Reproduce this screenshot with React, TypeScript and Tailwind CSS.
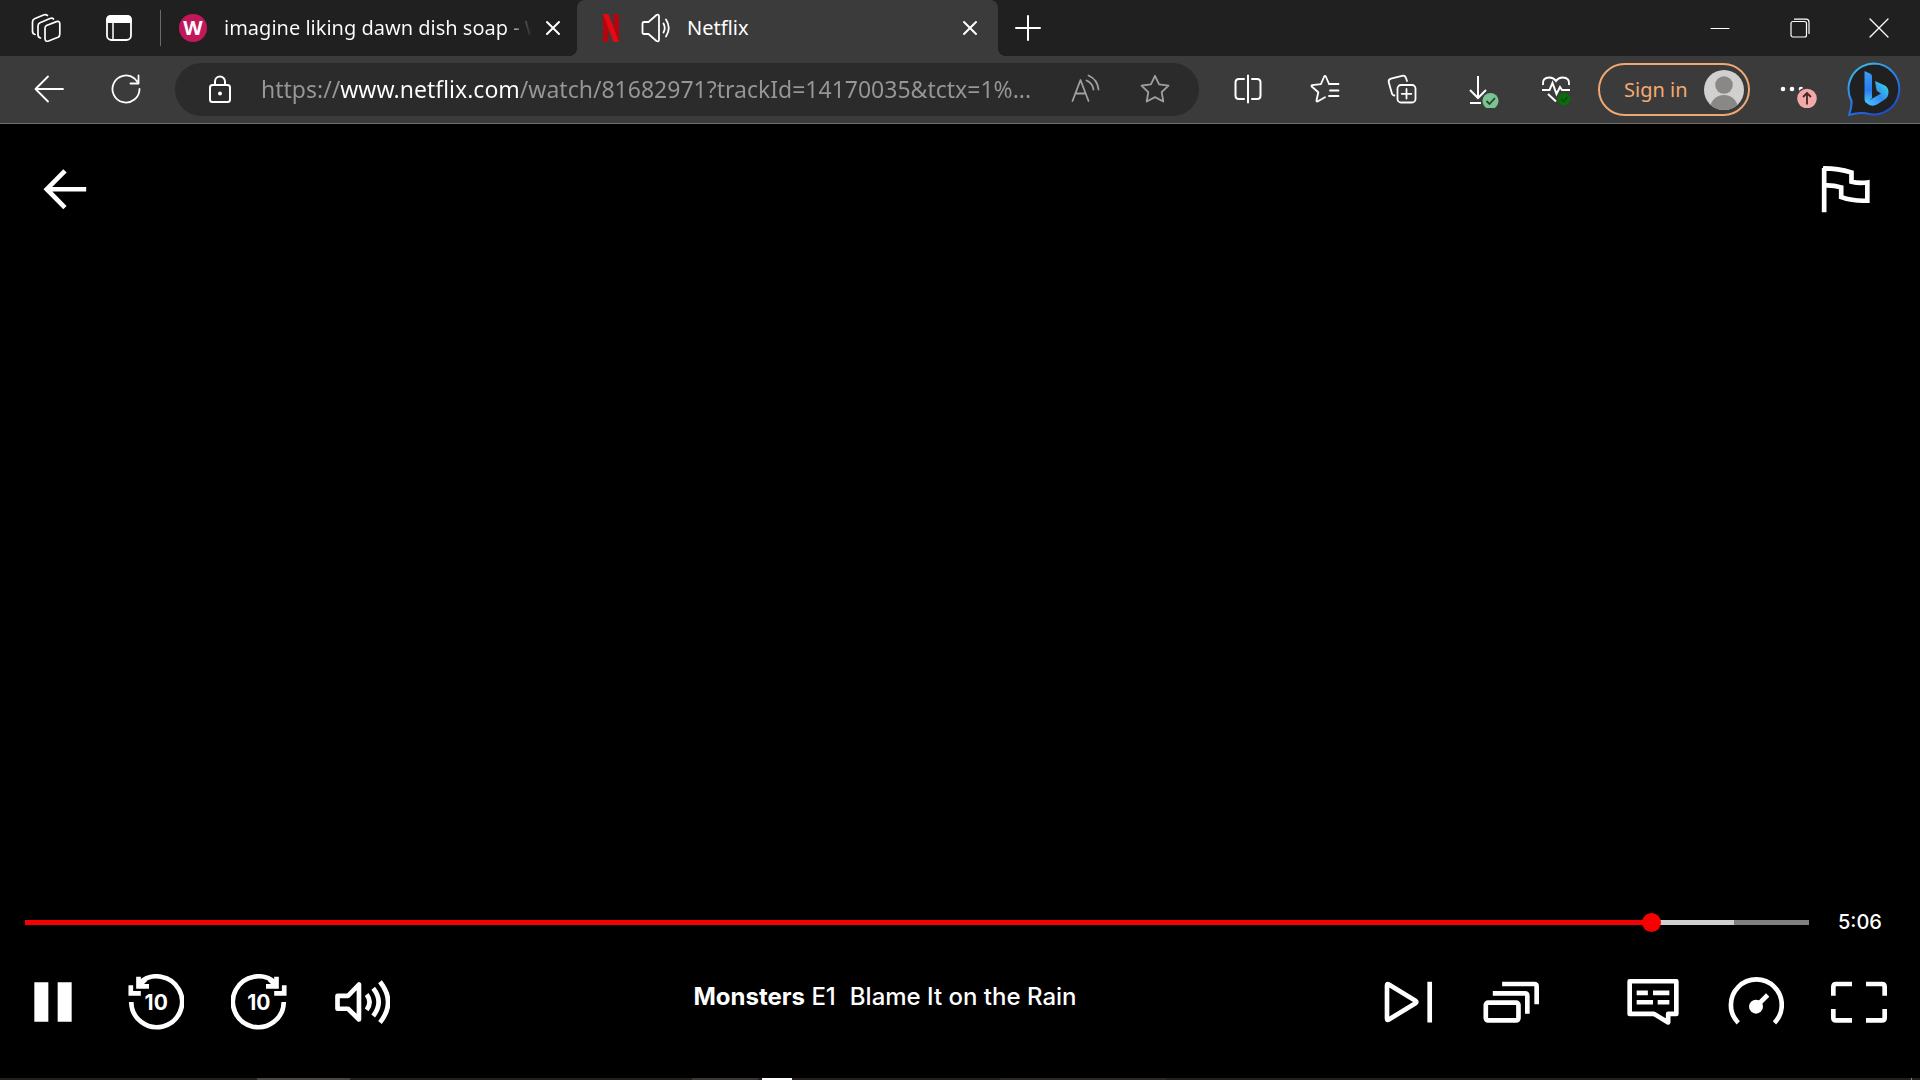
import React from "react";

interface IconProps {
  size: number;
  children: React.ReactNode;
  width?: number;
}

// thin outline icons of the browser chrome, 1 unit = 1px
const LineIcon: React.FC<IconProps> = ({ size, children, width = 2 }) => (
  <svg
    width={size}
    height={size}
    viewBox={`0 0 ${size} ${size}`}
    fill="none"
    stroke="currentColor"
    strokeWidth={width}
    strokeLinecap="round"
    strokeLinejoin="round"
    aria-hidden="true"
    className="shrink-0"
  >
    {children}
  </svg>
);

interface ButtonProps {
  label: string;
  className?: string;
  children: React.ReactNode;
}

const IconButton: React.FC<ButtonProps> = ({ label, className = "", children }) => (
  <button
    type="button"
    aria-label={label}
    className={`flex shrink-0 items-center justify-center ${className}`}
  >
    {children}
  </button>
);

const PlayerButton: React.FC<ButtonProps> = ({ label, children }) => (
  <button type="button" aria-label={label} className="size-14 shrink-0 text-white">
    <svg viewBox="0 0 24 24" className="size-14" fill="none" stroke="currentColor" strokeWidth="2">
      {children}
    </svg>
  </button>
);

const CloseIcon: React.FC = () => (
  <LineIcon size={16}>
    <path d="M2 2L14 14M14 2L2 14" />
  </LineIcon>
);

const TabBar: React.FC = () => (
  <div className="flex h-14 items-center bg-[#202020] text-white">
    <IconButton label="Workspaces" className="ml-[30px] size-8">
      <LineIcon size={32} width={1.7}>
        <path d="M16.500 13.500L26.500 9.600Q29.800 8.700 29.800 12V22Q29.800 24.500 28 25.300L18.500 29Q15 30 15 26.500V16.500Q15 14.300 16.500 13.500Z" />
        <path d="M10.500 26Q8 25.500 8 22.500V14Q8 11.500 10 10.700L20 6.500Q22.500 5.500 23.500 7" />
        <path d="M5 22.500Q2.500 22 2.500 19V10Q2.500 7.500 4.500 6.700L13.500 3Q16 2 17.500 3.500" />
      </LineIcon>
    </IconButton>
    <IconButton label="Tab actions" className="ml-[41px] size-8">
      <LineIcon size={32} width={1.8}>
        <rect x="4" y="4" width="24" height="24" rx="4.500" />
        <path d="M4 10V8Q4 4 8 4H24Q28 4 28 8V10Z" fill="currentColor" />
        <path d="M10 11V28" strokeWidth="1.500" />
      </LineIcon>
    </IconButton>
    <div className="ml-[25px] h-9 w-px bg-[#6a6a6a]" />

    <div className="ml-[18px] flex h-14 w-[398px] items-center">
      <span className="flex size-7 shrink-0 items-center justify-center rounded-full bg-[#c2185b] font-['Open_Sans',sans-serif] text-xl font-bold">
        W
      </span>
      <span className="ml-[17px] w-[321px] bg-[linear-gradient(to_right,#ffffff_280px,transparent_308px)] bg-clip-text font-['Noto_Sans',sans-serif] text-[20px] leading-7 whitespace-nowrap text-transparent">
        imagine liking dawn dish soap - W
      </span>
      <IconButton label="Close tab" className="size-4">
        <CloseIcon />
      </IconButton>
    </div>

    <div className="relative flex h-14 w-[421px] items-center rounded-t-lg bg-[#3b3b3b] before:absolute before:-left-2 before:bottom-0 before:size-2 before:bg-[radial-gradient(circle_at_0_0,#202020_8px,#3b3b3b_8px)] after:absolute after:-right-2 after:bottom-0 after:size-2 after:bg-[radial-gradient(circle_at_100%_0,#202020_8px,#3b3b3b_8px)]">
      <svg viewBox="0 0 18 28" className="ml-[25px] h-7 w-[18px]" aria-hidden="true">
        <path d="M1 0H6.500V28H1Z M11.500 0H17V28H11.500Z" fill="#b1060f" />
        <path d="M1 0H6.500L17 28H11.500Z" fill="#e50914" />
      </svg>
      <IconButton label="Mute tab" className="ml-5 size-8">
        <LineIcon size={32} width={1.800}>
          <path d="M4 10H8.500L16.500 3Q19 1.800 19 4.500V27.500Q19 30.200 16.500 29L8.500 22H4Q2.500 22 2.500 20.500V11.500Q2.500 10 4 10Z" />
          <path d="M23.500 11.500Q26 16 23.500 20.500M26 7.500Q31.500 16 26 24.500" />
        </LineIcon>
      </IconButton>
      <span className="ml-[15px] flex-1 font-['Noto_Sans',sans-serif] text-[20px] leading-7">
        Netflix
      </span>
      <IconButton label="Close tab" className="mr-5 size-4">
        <CloseIcon />
      </IconButton>
    </div>
    <IconButton label="New tab" className="ml-4 size-7">
      <LineIcon size={28}>
        <path d="M14 2V26M2 14H26" />
      </LineIcon>
    </IconButton>

    <div className="ml-auto flex h-14 pr-[2px]">
      <IconButton label="Minimize" className="w-20">
        <LineIcon size={20} width={1}>
          <path d="M1 10.500H19" />
        </LineIcon>
      </IconButton>
      <IconButton label="Restore" className="w-20">
        <LineIcon size={20} width={1.200}>
          <rect x="1" y="3.500" width="15.500" height="15.500" rx="2" />
          <path d="M4.500 1.200H16Q19 1.200 19 4.200V15.500" />
        </LineIcon>
      </IconButton>
      <IconButton label="Close window" className="w-[78px]">
        <LineIcon size={20} width={1.300}>
          <path d="M1 1L19 19M19 1L1 19" />
        </LineIcon>
      </IconButton>
    </div>
  </div>
);

const Toolbar: React.FC = () => (
  <div className="flex h-[68px] items-center border-b border-[#707070] bg-[#3b3b3b] text-white">
    <IconButton label="Back" className="ml-[33px] size-8 pb-0.5">
      <LineIcon size={32} width={1.800}>
        <path d="M30 16H2.500M15 3.500L2.500 16L15 28.500" />
      </LineIcon>
    </IconButton>
    <IconButton label="Refresh" className="ml-[45px] size-8 pb-0.5">
      <LineIcon size={32} width={1.800}>
        <path d="M29.500 16A13.500 13.500 0 1 1 24.500 5.500L28 9.500M28.500 2.500V10.500H20.500" />
      </LineIcon>
    </IconButton>

    <div className="ml-[33px] flex h-[53px] min-w-0 flex-1 items-center rounded-full bg-[#2b2b2b]">
      <IconButton label="View site information" className="ml-[29px] size-8 pb-0.5">
        <LineIcon size={32}>
          <rect x="6" y="12" width="20" height="17" rx="2.500" />
          <path d="M11 12V8.500A5 5 0 0 1 21 8.500V12" />
          <circle cx="16" cy="20.500" r="1" fill="currentColor" />
        </LineIcon>
      </IconButton>
      <input
        type="text"
        aria-label="Address and search bar"
        defaultValue="https://www.netflix.com/watch/81682971?trackId=14170035&tctx=1%..."
        className="ml-[25px] h-10 min-w-0 flex-1 bg-[linear-gradient(to_right,#979797_79px,#ffffff_79px,#ffffff_257px,#979797_257px)] bg-clip-text pb-0.5 font-['Noto_Sans',sans-serif] text-[23px] text-transparent outline-none"
      />
      <IconButton label="Read aloud" className="ml-3 size-8 pb-0.5 text-[#a0a0a0]">
        <LineIcon size={32} width={1.800}>
          <path d="M2.500 28L10.500 7L18.500 28M5.500 20.500H15.500" />
          <path d="M16.500 7.500Q22.500 10 23.500 16.500M18.500 2.500Q27.500 6.500 28.500 16.500" />
        </LineIcon>
      </IconButton>
      <IconButton label="Add to favorites" className="mr-7 ml-[37px] size-8 pb-0.5 text-[#a0a0a0]">
        <LineIcon size={32} width={1.800}>
          <path d="M16 2.800L20.100 11.300L29.500 12.600L22.700 19.200L24.300 28.500L16 24.100L7.700 28.500L9.300 19.200L2.500 12.600L11.900 11.300Z" />
        </LineIcon>
      </IconButton>
    </div>

    <IconButton label="Split screen" className="ml-[33px] size-8 pb-0.5">
      <LineIcon size={32}>
        <path d="M16 2.500V29.500M12 6H7Q3.500 6 3.500 9.500V22.500Q3.500 26 7 26H12M20 6H25Q28.500 6 28.500 9.500V22.500Q28.500 26 25 26H20" />
      </LineIcon>
    </IconButton>
    <IconButton label="Favorites" className="ml-[45px] size-8 pb-0.5">
      <LineIcon size={32} width={1.800}>
        <path d="M20 11H29.500M21 17.500H29.500M20 23H29.500" />
        <path d="M16 24.300L8.500 28.500Q7.300 28.800 7.500 27.500L9.300 19.200L2.700 13.500Q2 12.400 3.200 12.200L11.900 11.100L15.200 3.500Q16 2.300 16.800 3.500L19.800 10.500" />
      </LineIcon>
    </IconButton>
    <IconButton label="Collections" className="ml-[45px] size-8 pb-0.5">
      <LineIcon size={32} width={1.800}>
        <rect x="11.500" y="12" width="18" height="17.500" rx="3.500" />
        <path d="M20.500 16V25.500M15.700 20.800H25.300M8.500 22.500Q6.500 22.500 5.800 20L2.800 9.500Q2 6.500 5 5.600L16 2.800Q19 2 20 5L21 8" />
      </LineIcon>
    </IconButton>
    <IconButton label="Downloads" className="ml-[48px] size-9">
      <svg width="36" height="36" viewBox="0 0 36 36" fill="none" stroke="currentColor" strokeWidth="2">
        <path d="M12 4V25M4 18L12 26L20 18M4 31H15" />
        <circle cx="24.500" cy="29" r="8" fill="#7cc392" stroke="none" />
        <path d="M20.500 29L23.500 32L29 26" stroke="#24452e" strokeWidth="1.800" />
      </svg>
    </IconButton>
    <IconButton label="Browser essentials" className="ml-9 size-9">
      <svg width="36" height="36" viewBox="0 0 36 36" fill="none" stroke="currentColor" strokeWidth="2">
        <path d="M5 13Q4 5.500 11.500 5.500Q15.500 5.500 18 9Q20.500 5.500 24.500 5.500Q32 5.500 31 13M4 18H11.500L14.500 11L18.500 22L22 15L24 18H32M10 22L18 29.500" />
        <circle cx="26" cy="27" r="6.500" fill="#0b6a0b" stroke="none" />
        <path d="M23 27L25.500 29.500L29.500 25" stroke="#074d07" strokeWidth="1.500" />
      </svg>
    </IconButton>
    <button
      type="button"
      className="ml-6 flex h-[53px] w-[152px] shrink-0 items-center justify-between rounded-full border-2 border-[#f0a873] pr-1 pl-6 font-['Noto_Sans',sans-serif] text-[20px] text-[#f3aa75]"
    >
      Sign in
      <svg viewBox="0 0 40 40" className="size-10" aria-hidden="true">
        <clipPath id="avatar">
          <circle cx="20" cy="20" r="20" />
        </clipPath>
        <g clipPath="url(#avatar)">
          <rect width="40" height="40" fill="#d2d0ce" />
          <circle cx="20" cy="15" r="8.800" fill="#8a8886" />
          <circle cx="20" cy="39" r="14" fill="#8a8886" />
        </g>
      </svg>
    </button>
    <IconButton label="Settings and more" className="ml-7 h-9 w-10">
      <svg width="40" height="36" viewBox="0 0 40 36" fill="currentColor">
        <circle cx="5" cy="17" r="2.300" />
        <circle cx="14" cy="17" r="2.300" />
        <circle cx="23" cy="17" r="2.300" />
        <circle cx="29" cy="26.500" r="11" fill="#3b3b3b" />
        <circle cx="29" cy="26.500" r="9.800" fill="#f4a9a9" />
        <path d="M29 32.500V21M25 25L29 21L33 25" fill="none" stroke="#442726" strokeWidth="1.800" />
      </svg>
    </IconButton>
    <IconButton label="Discover" className="mr-[19px] ml-[29px] size-[54px] pb-0.5">
      <svg width="54" height="54" viewBox="0 0 54 54" className="shrink-0">
        <defs>
          <linearGradient id="ring" x1="0" y1="0" x2="0.6" y2="1">
            <stop offset="0" stopColor="#37c8e8" />
            <stop offset="0.5" stopColor="#2f86ee" />
            <stop offset="1" stopColor="#1b4fd0" />
          </linearGradient>
          <linearGradient id="stem" x1="0" y1="0" x2="0" y2="1">
            <stop offset="0" stopColor="#3a9cf5" />
            <stop offset="0.6" stopColor="#2a7cf0" />
            <stop offset="1" stopColor="#45c8f5" />
          </linearGradient>
          <linearGradient id="bowl" x1="1" y1="0" x2="0" y2="1">
            <stop offset="0" stopColor="#3fe0dc" />
            <stop offset="0.5" stopColor="#2f8cf2" />
            <stop offset="1" stopColor="#50c8ff" />
          </linearGradient>
        </defs>
        <path
          d="M27 1.500A25.500 25.500 0 1 1 19 51.300Q12 50 2 53Q5 45 4.500 39A25.500 25.500 0 0 1 27 1.500Z"
          fill="#202020"
          stroke="url(#ring)"
          strokeWidth="2"
        />
        <path d="M17.500 9L23 11.500Q25 12.500 25 14.500V36L19 41Q17.500 39 17.500 36Z" fill="url(#stem)" />
        <path
          d="M28 19L38 23.500Q41.500 25.500 41.500 30Q41.500 35.500 37 38L30 42.500Q26.500 44.500 22.500 43Q18.500 41.500 17.500 37Q20 39.500 23.500 37.500L34 31.500L31 29.800Q30 29.300 29.500 28Z"
          fill="url(#bowl)"
        />
      </svg>
    </IconButton>
  </div>
);

const Player: React.FC = () => (
  <main className="flex flex-1 flex-col bg-black font-[Inter,sans-serif] text-white">
    <div className="flex items-start justify-between pt-[37px] pr-12 pl-[40px]">
      <PlayerButton label="Back to browse">
        <path d="M19.800 12.100H3.500M10.700 4.200L2.900 12.100L10.700 20" />
      </PlayerButton>
      <PlayerButton label="Report a problem">
        <path d="M3.500 22V3M3 3.200Q9 3.100 15.200 4.900V8.900Q18.500 9.700 22 9.200V17Q16 17.300 10.800 15.500V11.300Q7 10.200 3.500 10.500" />
      </PlayerButton>
    </div>

    <div className="mt-auto flex h-8 items-center pl-[25px]">
      <input
        type="range"
        aria-label="Seek"
        min={0}
        max={1000}
        defaultValue={916}
        className="h-[5px] min-w-0 flex-1 appearance-none bg-[linear-gradient(to_right,#f40000_91%,#d0d0d0_91%,#d0d0d0_95.800%,#808080_95.800%)] outline-none [&::-webkit-slider-thumb]:size-[19px] [&::-webkit-slider-thumb]:appearance-none [&::-webkit-slider-thumb]:rounded-full [&::-webkit-slider-thumb]:bg-[#f80000]"
      />
      <span className="w-[111px] pl-[29px] text-[20px] font-medium">5:06</span>
    </div>

    <div className="mt-9 mb-12 flex items-center pr-[33px] pl-[25px]">
      <div className="flex gap-[47px]">
        <PlayerButton label="Pause">
          <path d="M4 3.500H10V20.500H4ZM14 3.500H20V20.500H14Z" fill="currentColor" stroke="none" />
        </PlayerButton>
        <PlayerButton label="Seek back 10 seconds">
          <path d="M1.400 12A10.900 10.900 0 1 0 5 3.800" />
          <path d="M4.500 1.200V5.300H9M1.200 4.800V8.300H5.500" />
          <path d="M4.500 5.200L7.500 2.300" />
          <text x="12.100" y="15.600" textAnchor="middle" fontSize="9" fontWeight="700" fill="currentColor" stroke="none">
            10
          </text>
        </PlayerButton>
        <PlayerButton label="Seek forward 10 seconds">
          <path d="M22.600 12A10.900 10.900 0 1 1 19 3.800" />
          <path d="M19.500 1.200V5.300H15M22.800 4.800V8.300H18.500" />
          <path d="M19.500 5.200L16.500 2.300" />
          <text x="11.900" y="15.600" textAnchor="middle" fontSize="9" fontWeight="700" fill="currentColor" stroke="none">
            10
          </text>
        </PlayerButton>
        <PlayerButton label="Volume">
          <path d="M1.500 9.400H6L10.700 4.500V19.500L6 14.900H1.500Z" strokeLinejoin="round" />
          <path d="M14 8.800Q16.500 12 14 15.400M16.800 6.100Q21.500 12 16.800 18M19.700 3.300Q26.700 12 19.700 20.800" />
        </PlayerButton>
      </div>
      <p className="mb-[10px] flex-1 text-center text-[24px] leading-8 font-medium">
        <span className="font-bold">Monsters</span> E1
        <span className="ml-[14px]">Blame It on the Rain</span>
      </p>
      <div className="flex gap-[47px]">
        <PlayerButton label="Next episode">
          <path d="M3 4.900V19.100Q3 20 3.800 19.500L15.200 12.500Q16 12 15.200 11.500L3.800 4.500Q3 4 3 4.900ZM21.300 3.300V20.800" />
        </PlayerButton>
        <div className="mr-[39px] flex">
          <PlayerButton label="Episodes">
            <rect x="1.200" y="12.300" width="14" height="7.600" rx="1" />
            <path d="M4.200 8.300H18Q19 8.300 19 9.300V17M8.200 4.300H22Q23 4.300 23 5.300V13" />
          </PlayerButton>
        </div>
        <PlayerButton label="Audio and subtitles">
          <path d="M2 3.100H22V17.100H18.500V20.800L12.500 17.100H2Z" strokeLinejoin="round" />
          <path d="M5 8.100H9.800M12 8.100H19M5 12.100H12M14 12.100H19" />
        </PlayerButton>
        <PlayerButton label="Playback speed">
          <path d="M4.400 20.900A10.900 10.900 0 1 1 19.900 20.900" />
          <circle cx="12" cy="14" r="3" fill="currentColor" stroke="none" />
          <path d="M12 14L17 9" />
        </PlayerButton>
        <PlayerButton label="Full screen">
          <path d="M1 9.300V5.500Q1 4.300 2.200 4.300H9M15 4.300H21.800Q23 4.300 23 5.500V9.300M23 15V18.700Q23 19.900 21.800 19.900H15M9 19.900H2.200Q1 19.900 1 18.700V15" />
        </PlayerButton>
      </div>
    </div>
  </main>
);

// top edge of the system taskbar
const Taskbar: React.FC = () => (
  <div className="flex h-[2px] bg-[#231f1f]">
    <div className="ml-[257px] w-[93px] bg-[#4a4747]" />
    <div className="ml-[342px] w-[66px] bg-[#3a3737]" />
    <div className="ml-1 w-[30px] bg-white" />
    <div className="ml-[208px] w-[166px] bg-[#2c2929]" />
    <div className="mr-2 ml-auto w-px bg-[#8a8888]" />
  </div>
);

const App: React.FC = () => {
  return (
    <div className="flex min-h-screen flex-col bg-black">
      <TabBar />
      <Toolbar />
      <Player />
      <Taskbar />
    </div>
  );
};

export default App;
